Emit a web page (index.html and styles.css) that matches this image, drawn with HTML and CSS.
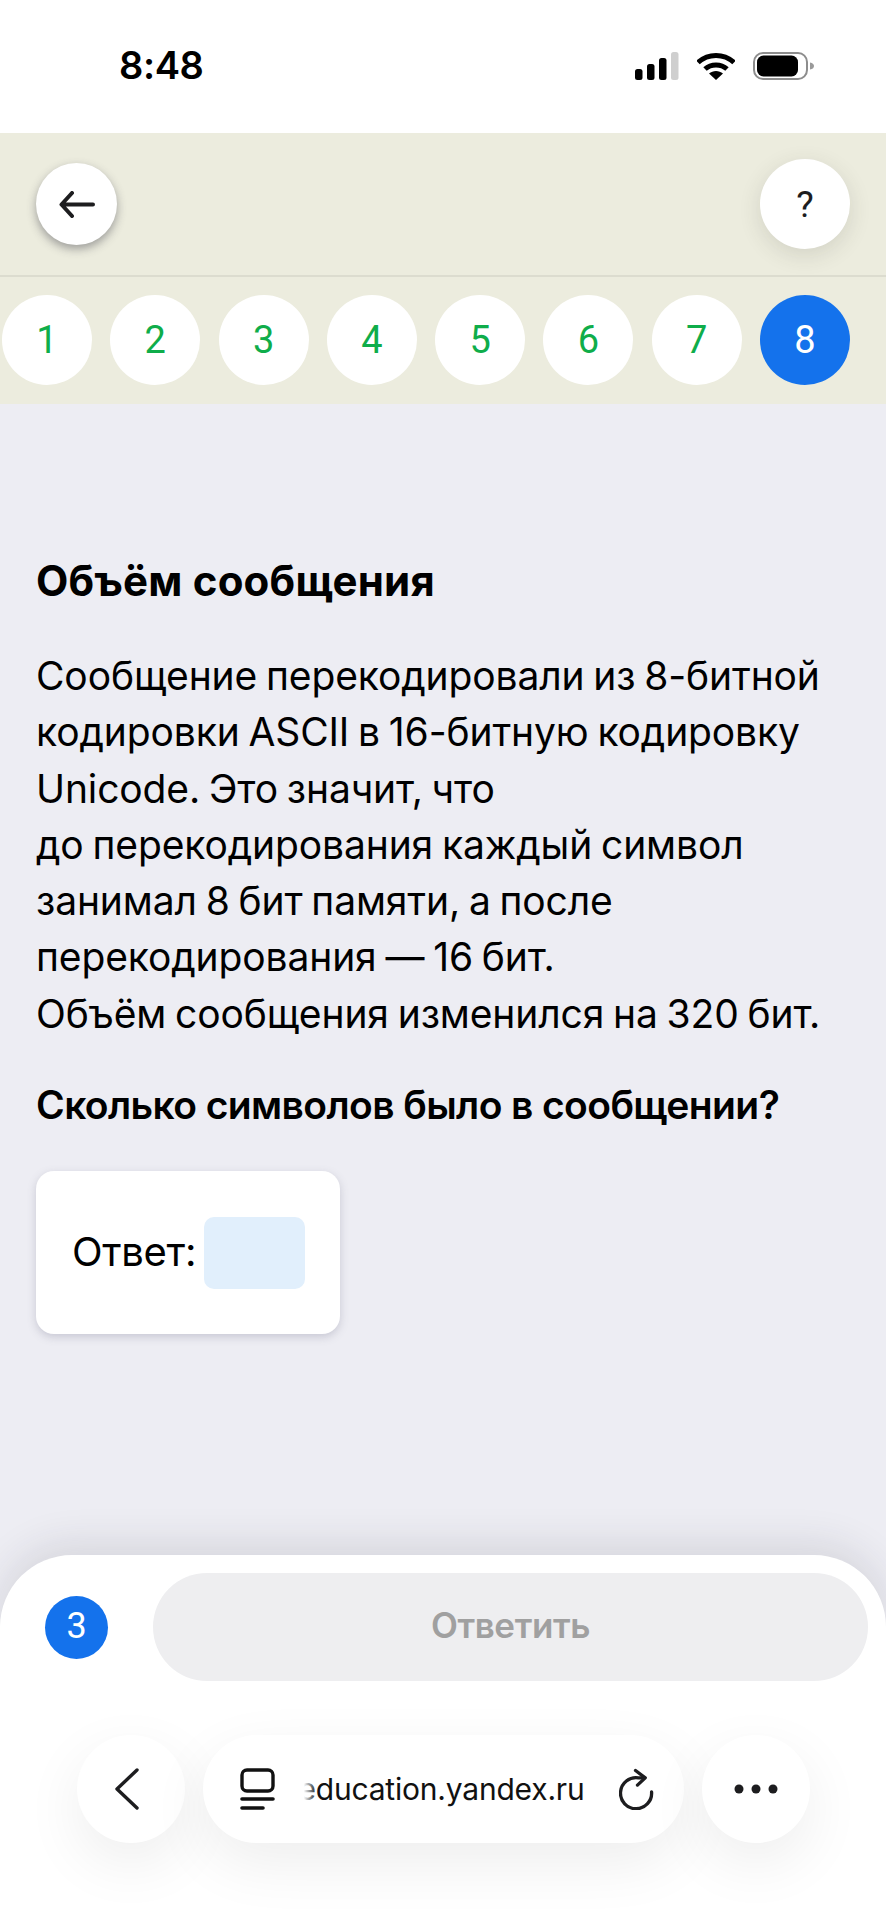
FILE: index.html
```html
<!DOCTYPE html>
<html lang="ru">
<head>
<meta charset="utf-8">
<title>Объём сообщения</title>
<link rel="stylesheet" href="styles.css">
</head>
<body>
<div class="page">
  <div class="status">
    <span class="time">8:48</span>
    <div class="status-icons">
      <svg class="signal" width="44" height="28" viewBox="0 0 44 28"><rect x="0" y="17" width="7.5" height="11" rx="2.5" fill="#000"/><rect x="12" y="12" width="7.5" height="16" rx="2.5" fill="#000"/><rect x="24" y="6" width="7.5" height="22" rx="2.5" fill="#000"/><rect x="36" y="0" width="7.5" height="28" rx="2.5" fill="#cfcfcf"/></svg>
      <svg class="wifi" width="38" height="28" viewBox="0 0 38 28"><path d="M1 10.5C11 1 27 1 37 10.5" fill="none" stroke="#000" stroke-width="5"/><path d="M8 17C14 11.5 24 11.5 30 17" fill="none" stroke="#000" stroke-width="5"/><path d="M12 21.5C16 18 22 18 26 21.5L19 28Z" fill="#000"/></svg>
      <svg class="battery" width="62" height="28" viewBox="0 0 62 28"><rect x="1" y="1" width="53" height="26" rx="9" fill="none" stroke="#8d8d8d" stroke-width="2"/><rect x="4" y="3.5" width="41" height="21" rx="6.5" fill="#000"/><path d="M57 10.5C60 11 61 12.5 61 14C61 15.5 60 17 57 17.5Z" fill="#9a9a9a"/></svg>
    </div>
  </div>
  <header class="header">
    <div class="topbar">
      <button class="back-btn"><svg width="36" height="27" viewBox="0 0 36 27"><path d="M34 13.5H3M13 2L2.500 13.500L13 25" fill="none" stroke="#1d1d1f" stroke-width="4" stroke-linecap="round" stroke-linejoin="round"/></svg></button>
      <button class="help-btn">?</button>
    </div>
    <div class="steps">
      <span class="step">1</span><span class="step">2</span><span class="step">3</span><span class="step">4</span><span class="step">5</span><span class="step">6</span><span class="step">7</span><span class="step step-active">8</span>
    </div>
  </header>
  <main class="content">
    <h1 class="title">Объём сообщения</h1>
    <p class="text">Сообщение перекодировали из 8-битной кодировки ASCII в 16-битную кодировку Unicode. Это значит, что<br>до перекодирования каждый символ занимал 8 бит памяти, а после перекодирования — 16 бит.<br>Объём сообщения изменился на 320 бит.</p>
    <p class="question">Сколько символов было в сообщении?</p>
    <div class="answer-card">
      <span class="answer-label">Ответ:</span>
      <span class="answer-input"></span>
    </div>
  </main>
  <section class="sheet">
    <div class="sheet-row">
      <span class="badge">3</span>
      <button class="submit">Ответить</button>
    </div>
    <nav class="browser">
      <span class="round-btn round-back"><svg width="26" height="42" viewBox="0 0 26 42"><path d="M23 2L3 21L23 40" fill="none" stroke="#1d1d1f" stroke-width="3.4" stroke-linecap="round" stroke-linejoin="round"/></svg></span>
      <div class="url-pill">
        <svg class="tab-icon" width="35" height="42" viewBox="0 0 35 42"><rect x="2" y="2" width="31" height="21" rx="5" fill="none" stroke="#111" stroke-width="3.4"/><path d="M2 31H33M2 40H23" fill="none" stroke="#111" stroke-width="3.6" stroke-linecap="round"/></svg>
        <span class="url-wrap"><span class="url">education.yandex.ru</span></span>
        <svg class="reload" width="35" height="42" viewBox="0 0 36 42"><path d="M33.500 24A16 16 0 1 1 20 9.500H26" fill="none" stroke="#1d1d1f" stroke-width="3.400" stroke-linecap="round"/><path d="M17 2L27 9.500L19 17" fill="none" stroke="#1d1d1f" stroke-width="3.400" stroke-linecap="round" stroke-linejoin="round"/></svg>
      </div>
      <span class="round-btn"><svg width="44" height="10" viewBox="0 0 44 10"><circle cx="5" cy="5" r="4.500" fill="#1d1d1f"/><circle cx="22" cy="5" r="4.500" fill="#1d1d1f"/><circle cx="39" cy="5" r="4.500" fill="#1d1d1f"/></svg></span>
    </nav>
  </section>
</div>
</body>
</html>
```
FILE: styles.css
```css
* { box-sizing: border-box; }
html, body { margin: 0; padding: 0; }
body { font-family: "Inter", "Liberation Sans", sans-serif; color: #000; background: #ededf3; }
button { font-family: inherit; border: 0; padding: 0; }
.page { width: 886px; height: 1920px; display: flex; flex-direction: column; overflow: hidden; background: #ededf3; }

.status { height: 133px; background: #fff; display: flex; align-items: flex-start; justify-content: space-between; padding: 44px 71px 0 119px; }
.time { font-size: 38px; line-height: 42px; font-weight: 600; letter-spacing: -0.4px; }
.status-icons { display: flex; align-items: flex-start; gap: 18px; padding-top: 8px; }

.header { background: #ececde; height: 271px; display: flex; flex-direction: column; }
.topbar { height: 144px; flex: none; border-bottom: 2px solid #dcdccf; display: flex; align-items: center; justify-content: space-between; padding: 0 36px; }
.back-btn { width: 81px; height: 82px; border-radius: 50%; background: #fff; display: flex; align-items: center; justify-content: center; box-shadow: 0 4px 10px rgba(60, 60, 70, 0.45); }
.help-btn { width: 90px; height: 90px; border-radius: 50%; background: #fff; font-family: "Roboto", sans-serif; font-size: 37px; font-weight: 400; color: #1d1d1f; box-shadow: 0 6px 22px rgba(60, 60, 50, 0.14); }
.steps { display: flex; justify-content: space-between; padding: 18px 36px 0 2px; }
.step { width: 90px; height: 90px; border-radius: 50%; background: #fff; color: #0fad4a; font-family: "Roboto", sans-serif; font-size: 38px; font-weight: 400; display: flex; align-items: center; justify-content: center; }
.step-active { background: #1472ec; color: #fff; }

.content { padding: 0 36px; }
.title { margin: 150px 0 0; font-size: 42px; line-height: 54px; font-weight: 700; letter-spacing: 0.2px; }
.text { margin: 40px 0 0; font-size: 39px; line-height: 56.3px; letter-spacing: -0.12px; word-spacing: -2px; }
.question { margin: 36px 0 0; font-size: 39px; line-height: 54px; font-weight: 600; letter-spacing: -0.6px; }
.answer-card { margin-top: 39px; width: 304px; height: 163px; background: #fff; border-radius: 18px; box-shadow: 0 3px 8px rgba(90, 90, 120, 0.25); display: flex; align-items: center; padding: 0 36px; gap: 8px; }
.answer-label { font-size: 40px; letter-spacing: -0.3px; padding-bottom: 3px; }
.answer-input { width: 101px; height: 72px; flex: none; border-radius: 10px; background: #e1effc; }

.sheet { margin-top: auto; height: 365px; flex: none; background: #fff; border-radius: 72px 72px 0 0; box-shadow: 0 -10px 40px rgba(40, 40, 60, 0.12); display: flex; flex-direction: column; }
.sheet-row { display: flex; align-items: center; padding: 18px 18px 0 45px; }
.badge { width: 63px; height: 63px; flex: none; border-radius: 50%; background: #1472ec; color: #fff; font-family: "Roboto", sans-serif; font-size: 36px; font-weight: 400; padding-bottom: 2px; display: flex; align-items: center; justify-content: center; }
.submit { margin-left: 45px; flex: 1; height: 108px; border-radius: 54px; background: #eeeef0; color: #a0a0a0; font-size: 35px; font-weight: 600; letter-spacing: -0.4px; padding-bottom: 4px; }
.browser { margin-top: 54px; display: flex; justify-content: center; gap: 18px; }
.round-btn { width: 108px; height: 108px; border-radius: 50%; background: #fff; display: flex; align-items: center; justify-content: center; box-shadow: 0 20px 60px rgba(0, 0, 0, 0.07); }
.round-back { padding-right: 7px; }
.url-pill { width: 481px; height: 108px; border-radius: 54px; background: #fff; display: flex; align-items: center; padding: 0 30px 0 37px; box-shadow: 0 20px 60px rgba(0, 0, 0, 0.07); }
.url-wrap { position: relative; width: 278px; margin-left: 32px; white-space: nowrap; display: flex; justify-content: flex-end; }
.url-wrap::before { content: ""; position: absolute; left: -14px; top: 0; bottom: 0; width: 24px; background: linear-gradient(90deg, #fff 45%, rgba(255, 255, 255, 0)); z-index: 1; }
.url { font-size: 30px; line-height: 40px; letter-spacing: -0.2px; color: #111; flex: none; }
.reload { margin-left: auto; }
```
